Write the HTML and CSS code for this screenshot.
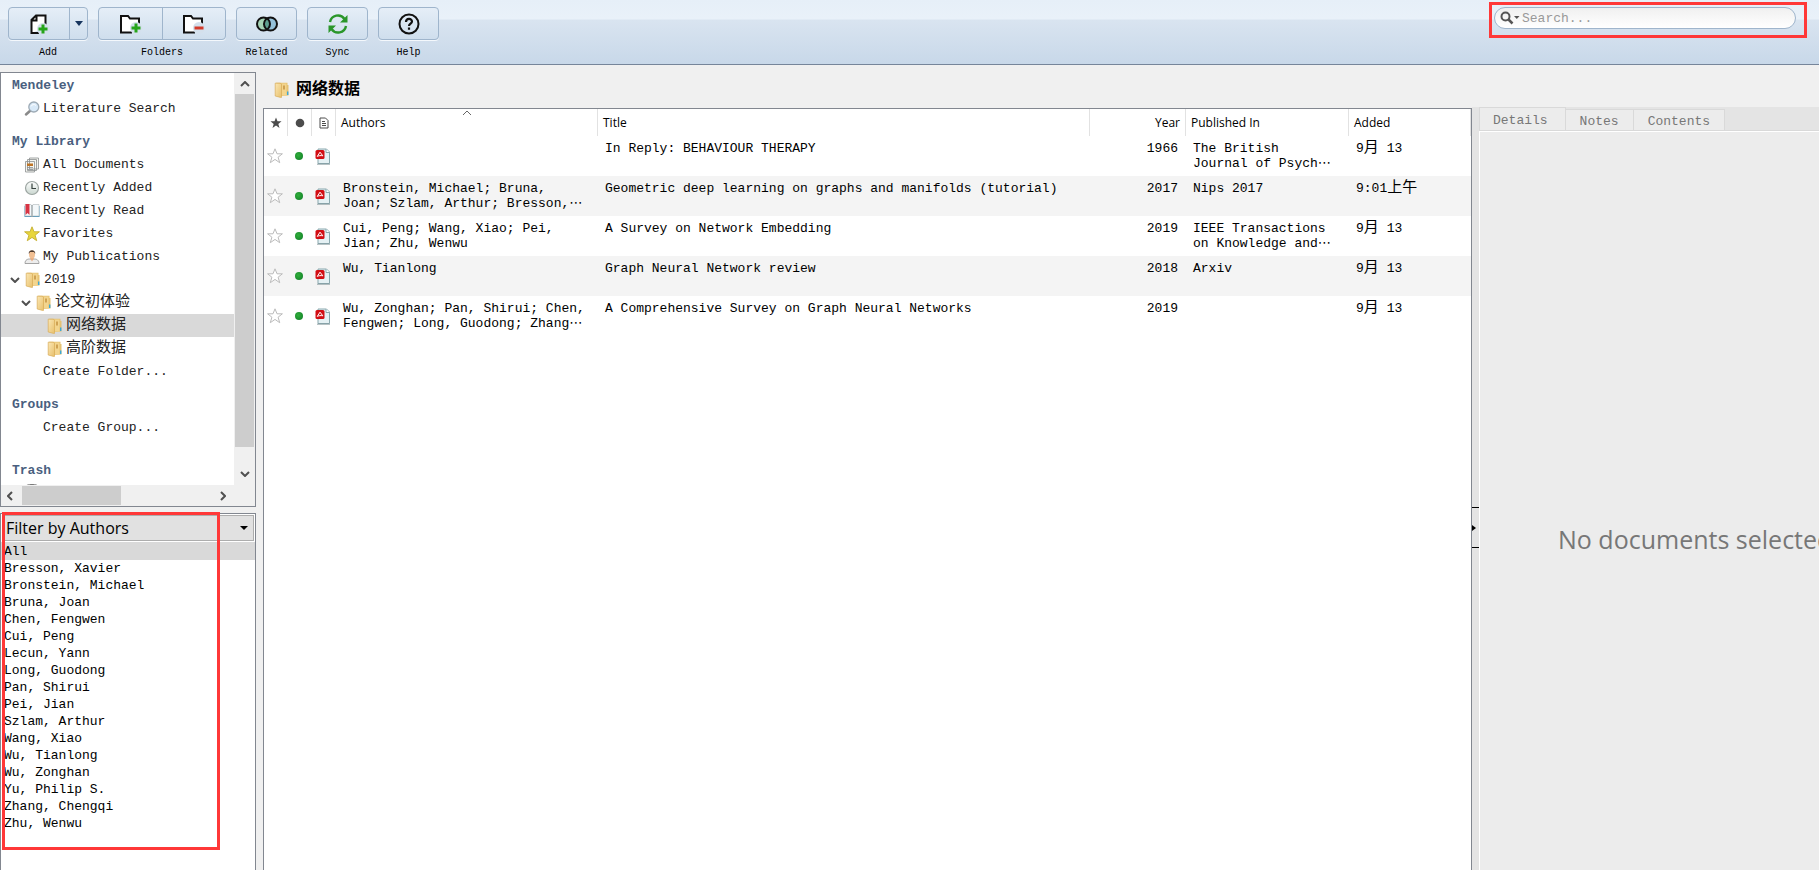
FILE: index.html
```html
<!DOCTYPE html>
<html lang="en">
<head>
<meta charset="utf-8">
<title>Reference Library</title>
<link rel="stylesheet" href="styles.css">
</head>
<body>
<svg class="defs" aria-hidden="true">
  <defs>
    <linearGradient id="gold" x1="0" x2="1" y1="0" y2="1"><stop offset="0" stop-color="#fbe7b4"/><stop offset="1" stop-color="#e8c06c"/></linearGradient>
    <radialGradient id="green" cx=".4" cy=".4" r=".6"><stop offset="0" stop-color="#2fae3a"/><stop offset="1" stop-color="#188a2c"/></radialGradient>
    <linearGradient id="clock" x1="0" x2="0" y1="0" y2="1"><stop offset="0" stop-color="#fff"/><stop offset="1" stop-color="#c9d6cf"/></linearGradient>
    <symbol id="folder" viewBox="0 0 16 16">
      <path d="M2 .8h11.500v2.200h1v10.500L7 14z" fill="#e6c272"/>
      <path d="M7.500 1.500h5v12h-5z" fill="#f3d58e"/>
      <path d="M1.200 1.200h5l1.300 1v13.200H6.500L1.200 14z" fill="url(#gold)" stroke="#d8ac58" stroke-width=".7"/>
      <path d="M9 3.500h2v4H9z" fill="#cfa253"/>
      <path d="M13 9.500h1.400v3.500H13z" fill="#3aa8d8"/>
    </symbol>
    <symbol id="star" viewBox="0 0 16 16"><path d="M8 .8l2 5h5.400l-4.300 3.400 1.600 5.500L8 11.400l-4.700 3.300 1.600-5.500L.6 5.800H6z"/></symbol>
    <symbol id="pdf" viewBox="0 0 16 17">
      <path d="M3 1h8.500l3 3v11.500H3z" fill="#e5f1f4" stroke="#8aa8ae"/>
      <path d="M11 1v3.500h3.500" fill="#fff" stroke="#8aa8ae"/>
      <path d="M2 16.200h13" stroke="#7d9397" stroke-width=".8"/>
      <rect x=".5" y="2" width="9" height="9" rx="1.500" fill="#d20d13"/>
      <path d="M5 4.200L7.800 7.800C5.500 7.300 4 7.700 2.300 8.400z" fill="none" stroke="#fff"/>
    </symbol>
    <symbol id="chev" viewBox="0 0 10 6"><path d="M1 1l4 4 4-4" fill="none" stroke="#505050" stroke-width="2"/></symbol>
  </defs>
</svg>

<header class="toolbar">
  <div class="tool">
    <div class="group">
      <button class="btn btn-add" aria-labelledby="l-add"><svg width="20" height="24" viewBox="0 0 20 24"><path d="M2 21V9l6-6h8.500v13M2 20.800h9" fill="#fff"/><path d="M16.500 13V3.500H7L2.500 8v13H10M7.500 4v4.500H3" fill="none" stroke="#111" stroke-width="2"/><circle cx="14" cy="17" r="6" fill="#d4e0ec"/><path d="M14 12.500v9M9.500 17h9" stroke="#27a51b" stroke-width="3"/></svg></button>
      <button class="btn btn-drop" aria-label="Add options"><svg width="8" height="5" viewBox="0 0 8 5"><path d="M0 0h8L4 5z" fill="#17355e"/></svg></button>
    </div>
    <span class="tool-label label-add" id="l-add">Add</span>
  </div>
  <div class="tool">
    <div class="group">
      <button class="btn btn-folder" aria-label="Create folder"><svg width="24" height="24" viewBox="0 0 24 24"><path d="M2 4h7l2 3h9v14H2z" fill="#fff"/><path d="M20 13V6.500h-9L9 4H2v16.500h11" fill="none" stroke="#111" stroke-width="2"/><circle cx="17" cy="16" r="6" fill="#d4e0ec"/><path d="M17 11.500v9M12.500 16h9" stroke="#27a51b" stroke-width="3"/></svg></button>
      <button class="btn btn-folder split" aria-label="Remove folder"><svg width="24" height="24" viewBox="0 0 24 24"><path d="M2 4h7l2 3h9v14H2z" fill="#fff"/><path d="M20 13V6.500h-9L9 4H2v16.500h11" fill="none" stroke="#111" stroke-width="2"/><circle cx="17" cy="16" r="6" fill="#d4e0ec"/><path d="M12.500 16h9" stroke="#d33a2a" stroke-width="3"/></svg></button>
    </div>
    <span class="tool-label">Folders</span>
  </div>
  <div class="tool">
    <div class="group"><button class="btn btn-one" aria-labelledby="l-rel"><svg width="24" height="18" viewBox="0 0 24 18"><circle cx="8.500" cy="9" r="6.500" fill="#a5d3b5"/><circle cx="15.500" cy="9" r="6.500" fill="#94c1da"/><path d="M12 3.500a6.500 6.500 0 0 1 0 11 6.500 6.500 0 0 1 0-11z" fill="#5e9f90"/><g fill="none" stroke="#111" stroke-width="2"><circle cx="8.500" cy="9" r="6.500"/><circle cx="15.500" cy="9" r="6.500"/></g></svg></button></div>
    <span class="tool-label" id="l-rel">Related</span>
  </div>
  <div class="tool">
    <div class="group"><button class="btn btn-one" aria-labelledby="l-sync"><svg width="22" height="22" viewBox="0 0 22 22"><g fill="none" stroke="#2a962a" stroke-width="2.400"><path d="M3 9a8 8 0 0 1 14.500-3M19 13a8 8 0 0 1-14.500 3"/></g><path d="M20.500 2v7.500H13zM1.500 20v-7.500H9z" fill="#2a962a"/></svg></button></div>
    <span class="tool-label" id="l-sync">Sync</span>
  </div>
  <div class="tool">
    <div class="group"><button class="btn btn-one" aria-labelledby="l-help"><svg width="24" height="24" viewBox="0 0 24 24" fill="none" stroke="#111" stroke-width="2"><circle cx="12" cy="12" r="9.500"/><path d="M9 10c0-4 6-4 6-.5 0 2-3 2.200-3 4.500M12 15.500v2.200" stroke-width="2.200"/></svg></button></div>
    <span class="tool-label" id="l-help">Help</span>
  </div>
  <div class="search">
    <svg width="20" height="14" viewBox="0 0 20 14"><circle cx="5.500" cy="5.500" r="4" fill="none" stroke="#555" stroke-width="2"/><path d="M8.500 8.500l4 4" stroke="#555" stroke-width="2.500"/><path d="M14 5h5.500l-2.700 3z" fill="#555"/></svg>
    <input type="text" placeholder="Search..." aria-label="Search">
    <span class="mark mark-search"></span>
  </div>
</header>

<main class="workspace">
  <div class="sidebar">
    <nav class="tree" aria-label="Library">
      <div class="tree-list">
        <h2>Mendeley</h2>
        <a href="#"><svg width="16" height="16" viewBox="0 0 16 16"><path d="M2 13.500l5-4.500" stroke="#8a8a8a" stroke-width="2.500" stroke-linecap="round"/><circle cx="9.800" cy="6" r="5" fill="#d8e9f8" stroke="#9daab5" stroke-width="1.300"/><path d="M7 5.500a3 3 0 0 1 5-1" stroke="#fff" fill="none"/></svg>Literature Search</a>
        <h2 class="gap">My Library</h2>
        <a href="#"><svg width="16" height="16" viewBox="0 0 16 16" stroke="#8b8f91" stroke-width=".8" fill="#f5f5f0"><path d="M5.500 1h9v11h-9zM3.500 2.500h9v11h-9zM1.500 4.500h9v10.500h-9z"/><path d="M3 6.500h6v2.500H3z" fill="#bd7427" stroke="none"/><path d="M3 10.500h6M3 12.500h6M12 3.500h1"/></svg>All Documents</a>
        <a href="#"><svg width="16" height="16" viewBox="0 0 16 16"><circle cx="8" cy="8" r="6.500" fill="url(#clock)" stroke="#9ca5a1" stroke-width="1.200"/><path d="M8 3.500v5h4" fill="none" stroke="#36413d" stroke-width="1.200"/></svg>Recently Added</a>
        <a href="#"><svg width="16" height="16" viewBox="0 0 16 16"><path d="M.5 3v11h15V3" fill="#4b93bd"/><path d="M1 1.500h6l1 1 1-1h6v11.500H9l-1 1-1-1H1z" fill="#f4f8fa" stroke="#b0b8bb" stroke-width=".6"/><path d="M1.500 1h4v11l-2-2-2 2z" fill="#d83443"/><path d="M8 2v12" stroke="#7b8588"/></svg>Recently Read</a>
        <a href="#"><svg class="fav" width="16" height="16"><use href="#star"/></svg>Favorites</a>
        <a href="#"><svg width="16" height="16" viewBox="0 0 16 16"><path d="M1 14.500c0-4 3-4.500 4.500-4.500h5c2 0 4.500 1 4.500 4.500z" fill="#ededed" stroke="#909090" stroke-width=".8"/><path d="M6 9h4l-2 3.500z" fill="#e9aa7b"/><ellipse cx="8" cy="5.500" rx="3" ry="4" fill="#f1bf93"/><path d="M4.800 5C4 0 12 0 11.200 5L10 3H6z" fill="#4b382d"/></svg>My Publications</a>
        <a href="#" class="lv0"><svg class="exp" width="10" height="6"><use href="#chev"/></svg><svg width="16" height="16"><use href="#folder"/></svg>2019</a>
        <a href="#" class="lv1"><svg class="exp" width="10" height="6"><use href="#chev"/></svg><svg width="16" height="16"><use href="#folder"/></svg><span class="cjk">论文初体验</span></a>
        <a href="#" class="lv2 current"><svg width="16" height="16"><use href="#folder"/></svg><span class="cjk">网络数据</span></a>
        <a href="#" class="lv2"><svg width="16" height="16"><use href="#folder"/></svg><span class="cjk">高阶数据</span></a>
        <a href="#" class="plain">Create Folder...</a>
        <h2 class="gap">Groups</h2>
        <a href="#" class="plain">Create Group...</a>
        <h2 class="gap-wide">Trash</h2>
        <a href="#" class="trash" aria-label="All deleted documents"><svg width="16" height="16" viewBox="0 0 16 16"><path d="M2 3h12l-1.500 12h-9z" fill="#ddd"/><ellipse cx="8" cy="2.500" rx="6.500" ry="2" fill="#bbb" stroke="#777"/></svg></a>
      </div>
      <div class="vbar">
        <svg class="up" width="10" height="6"><use href="#chev"/></svg>
        <div class="vthumb"></div>
        <svg width="10" height="6"><use href="#chev"/></svg>
      </div>
      <div class="hbar">
        <svg width="6" height="10" viewBox="0 0 6 10"><path d="M5 1L1 5l4 4" fill="none" stroke="#505050" stroke-width="2"/></svg>
        <div class="hthumb"></div>
        <svg width="6" height="10" viewBox="0 0 6 10"><path d="M1 1l4 4-4 4" fill="none" stroke="#505050" stroke-width="2"/></svg>
      </div>
    </nav>
    <section class="filter">
      <div class="filter-head">
        <select aria-label="Filter"><option>Filter by Authors</option></select>
        <svg width="8" height="4" viewBox="0 0 8 4"><path d="M0 0h8L4 4z"/></svg>
      </div>
      <ul>
        <li class="current">All</li>
        <li>Bresson, Xavier</li>
        <li>Bronstein, Michael</li>
        <li>Bruna, Joan</li>
        <li>Chen, Fengwen</li>
        <li>Cui, Peng</li>
        <li>Lecun, Yann</li>
        <li>Long, Guodong</li>
        <li>Pan, Shirui</li>
        <li>Pei, Jian</li>
        <li>Szlam, Arthur</li>
        <li>Wang, Xiao</li>
        <li>Wu, Tianlong</li>
        <li>Wu, Zonghan</li>
        <li>Yu, Philip S.</li>
        <li>Zhang, Chengqi</li>
        <li>Zhu, Wenwu</li>
      </ul>
      <span class="mark mark-filter"></span>
    </section>
  </div>

  <section class="documents">
    <h1><svg width="16" height="16"><use href="#folder"/></svg>网络数据</h1>
    <div class="table-box">
      <table>
        <colgroup><col class="c-icon"><col class="c-icon"><col class="c-icon"><col class="c-authors"><col><col class="c-year"><col class="c-pub"><col class="c-added"></colgroup>
        <thead>
          <tr>
            <th class="ic" aria-label="Favorite"><svg class="dark" width="12" height="12" viewBox="0 0 12 12"><use href="#star" width="12" height="12"/></svg></th>
            <th class="ic" aria-label="Read"><svg width="10" height="10" viewBox="0 0 10 10"><circle cx="5" cy="5" r="4.300" fill="#4c4c4c"/></svg></th>
            <th class="ic" aria-label="File"><svg width="10" height="12" viewBox="0 0 10 12" fill="none" stroke="#4c4c4c"><path d="M1 1h5.500l2.500 2.500V11H1zM3 4.500h3M3 6.500h4M3 8.500h4"/></svg></th>
            <th class="sorted">Authors<svg class="sort" width="10" height="6" viewBox="0 0 10 6"><path d="M1 5l4-4 4 4" fill="none" stroke="#666"/></svg></th>
            <th>Title</th><th class="year">Year</th><th>Published In</th><th>Added</th>
          </tr>
        </thead>
        <tbody>
          <tr><td class="ic"><svg class="off" width="16" height="16"><use href="#star"/></svg></td><td class="ic"><svg width="10" height="10"><circle cx="5" cy="5" r="4" fill="url(#green)"/></svg></td><td class="ic"><svg width="16" height="17"><use href="#pdf"/></svg></td><td></td><td>In Reply: BEHAVIOUR THERAPY</td><td class="year">1966</td><td>The British<br>Journal of Psych<span class="dots">&#8943;</span></td><td>9<span class="cjk">月</span> 13</td></tr>
          <tr><td class="ic"><svg class="off" width="16" height="16"><use href="#star"/></svg></td><td class="ic"><svg width="10" height="10"><circle cx="5" cy="5" r="4" fill="url(#green)"/></svg></td><td class="ic"><svg width="16" height="17"><use href="#pdf"/></svg></td><td>Bronstein, Michael; Bruna,<br>Joan; Szlam, Arthur; Bresson,<span class="dots">&#8943;</span></td><td>Geometric deep learning on graphs and manifolds (tutorial)</td><td class="year">2017</td><td>Nips 2017</td><td>9:01<span class="cjk">上午</span></td></tr>
          <tr><td class="ic"><svg class="off" width="16" height="16"><use href="#star"/></svg></td><td class="ic"><svg width="10" height="10"><circle cx="5" cy="5" r="4" fill="url(#green)"/></svg></td><td class="ic"><svg width="16" height="17"><use href="#pdf"/></svg></td><td>Cui, Peng; Wang, Xiao; Pei,<br>Jian; Zhu, Wenwu</td><td>A Survey on Network Embedding</td><td class="year">2019</td><td>IEEE Transactions<br>on Knowledge and<span class="dots">&#8943;</span></td><td>9<span class="cjk">月</span> 13</td></tr>
          <tr><td class="ic"><svg class="off" width="16" height="16"><use href="#star"/></svg></td><td class="ic"><svg width="10" height="10"><circle cx="5" cy="5" r="4" fill="url(#green)"/></svg></td><td class="ic"><svg width="16" height="17"><use href="#pdf"/></svg></td><td>Wu, Tianlong</td><td>Graph Neural Network review</td><td class="year">2018</td><td>Arxiv</td><td>9<span class="cjk">月</span> 13</td></tr>
          <tr><td class="ic"><svg class="off" width="16" height="16"><use href="#star"/></svg></td><td class="ic"><svg width="10" height="10"><circle cx="5" cy="5" r="4" fill="url(#green)"/></svg></td><td class="ic"><svg width="16" height="17"><use href="#pdf"/></svg></td><td>Wu, Zonghan; Pan, Shirui; Chen,<br>Fengwen; Long, Guodong; Zhang<span class="dots">&#8943;</span></td><td>A Comprehensive Survey on Graph Neural Networks</td><td class="year">2019</td><td></td><td>9<span class="cjk">月</span> 13</td></tr>
        </tbody>
      </table>
    </div>
  </section>

  <div class="splitter"><div class="handle"><svg width="4" height="6" viewBox="0 0 4 6"><path d="M0 0l4 3-4 3z"/></svg></div></div>

  <aside class="details">
    <div class="tabs" role="tablist">
      <button class="tab active" role="tab">Details</button>
      <button class="tab" role="tab">Notes</button>
      <button class="tab" role="tab">Contents</button>
    </div>
    <div class="pane"><p>No documents selected</p></div>
  </aside>
</main>
</body>
</html>
```
FILE: styles.css
```css
* { box-sizing: border-box; }

body {
  margin: 0;
  height: 100vh;
  display: flex;
  flex-direction: column;
  overflow: hidden;
  background: #f0f0f0;
  color: #000;
  font: 13px/15px "Liberation Mono", "Noto Sans CJK SC", monospace;
}

button, input, select { font: inherit; color: inherit; }
svg { flex: none; display: block; }
.defs { position: absolute; width: 0; height: 0; }
.cjk { font-size: 15px; }
.dots { font-family: "DejaVu Sans", sans-serif; line-height: 0; }

/* Toolbar */
.toolbar {
  display: flex;
  flex: none;
  align-items: flex-start;
  gap: 10px;
  padding: 7px 23px 4px 8px;
  border-bottom: 1px solid #76859a;
  background: linear-gradient(#e6eff8, #e9f1f9 30%, #d9e4f0 31%, #c8d8e9);
}
.tool { display: flex; flex-direction: column; gap: 6px; }
.group {
  display: flex;
  height: 33px;
  border: 1px solid #9fb5cc;
  border-radius: 4px;
  background: linear-gradient(#e5eef7, #cfdeed);
  box-shadow: 0 1px 0 #f4f8fc;
}
.btn {
  display: flex;
  align-items: center;
  justify-content: center;
  padding: 0;
  border: 0;
  background: none;
}
.btn-add { width: 60px; }
.btn-drop { width: 18px; border-left: 1px solid #9fb5cc; }
.btn-folder { width: 63px; }
.split { border-left: 1px solid #9fb5cc; }
.btn-one { width: 59px; }
.tool-label { font-size: 10px; line-height: 14px; text-align: center; }

.search {
  position: relative;
  display: flex;
  align-items: center;
  gap: 2px;
  width: 302px;
  height: 22px;
  margin-left: auto;
  padding: 0 5px;
  border: 1px solid #9fb5cc;
  border-radius: 11px;
  background: linear-gradient(#f0f0f0, #fff);
}
.search input {
  flex: 1;
  min-width: 0;
  padding: 0;
  border: 0;
  outline: 0;
  background: none;
}
.search input::placeholder { color: #999; opacity: 1; }

.mark { position: absolute; border: 3px solid #ff3838; pointer-events: none; }
.mark-search { inset: -6px -12px -10px -6px; }
.mark-filter { top: -2px; left: 1px; width: 218px; height: 338px; }

/* Workspace */
.workspace { flex: 1; display: flex; min-height: 0; }
.sidebar {
  flex: none;
  width: 256px;
  display: flex;
  flex-direction: column;
  gap: 6px;
  padding-top: 7px;
}
.tree {
  flex: 435 1 0;
  min-height: 0;
  display: grid;
  grid-template: minmax(0, 1fr) 21px / minmax(0, 1fr) 21px;
  border: 1px solid #828790;
  background: #f0f0f0;
}
.tree-list { overflow: hidden; padding-top: 1px; background: #fff; color: #222; }
.tree-list h2 {
  margin: 0;
  padding-left: 11px;
  font-size: 13px;
  line-height: 23px;
  color: #4a5f7f;
}
.tree-list .gap { margin-top: 10px; }
.tree-list .gap-wide { margin-top: 20px; }
.tree-list a {
  display: flex;
  align-items: center;
  gap: 3px;
  height: 23px;
  padding-left: 23px;
  color: inherit;
  text-decoration: none;
}
.tree-list .lv0 { padding-left: 9px; }
.tree-list .lv1 { padding-left: 20px; }
.tree-list .lv2 { padding-left: 46px; }
.tree-list .plain { padding-left: 42px; }
.tree-list .trash { align-items: flex-start; padding-top: 2px; }
.tree-list .current { background: #d9d9d9; }
.exp { margin-right: 2px; }
.fav { fill: #e8d63c; stroke: #c9b43a; stroke-width: 1px; }

.vbar { display: flex; flex-direction: column; align-items: center; padding: 8px 1px; gap: 7px; }
.vthumb { flex: 1; width: 19px; margin-bottom: 17px; background: #cdcdcd; }
.up { transform: rotate(180deg); }
.hbar { display: flex; align-items: center; padding: 0 8px 0 6px; gap: 9px; }
.hthumb { width: 99px; height: 19px; background: #cdcdcd; }
.hbar svg:last-child { margin-left: auto; }

.filter {
  position: relative;
  flex: 357 1 0;
  border: 1px solid #828790;
  border-bottom: 0;
  background: #fff;
}
.filter-head {
  display: flex;
  align-items: center;
  height: 26px;
  margin: 1px;
  padding-right: 5px;
  border: 1px solid #adadad;
  background: #e1e1e1;
}
.filter-head select {
  appearance: none;
  flex: 1;
  padding: 0 3px;
  border: 0;
  background: none;
  font: 16px/22px "Open Sans", "Noto Sans", sans-serif;
}
.filter ul { margin: 0; padding: 0; list-style: none; }
.filter li { padding-left: 3px; line-height: 17px; }
.filter .current { padding-top: 1px; background: #d9d9d9; }

/* Document list */
.documents {
  flex: 1;
  min-width: 0;
  display: flex;
  flex-direction: column;
  padding-left: 7px;
}
h1 {
  display: flex;
  align-items: center;
  gap: 6px;
  margin: 0;
  padding: 13px 0 6px 11px;
  font-size: 16px;
  line-height: 24px;
}
.table-box { flex: 1; border: 1px solid #828790; border-bottom: 0; background: #fff; }
table { width: 100%; table-layout: fixed; border-collapse: separate; border-spacing: 0; }
.c-icon { width: 24px; }
.c-authors { width: 262px; }
.c-year { width: 96px; }
.c-pub { width: 163px; }
.c-added { width: 122px; }
th {
  height: 27px;
  padding: 0 5px;
  border-right: 1px solid #e2e2e2;
  text-align: left;
  font: 12px/18px "Open Sans", "Noto Sans", sans-serif;
}
.sorted { position: relative; }
.sort { position: absolute; top: 1px; left: calc(50% - 5px); }
td {
  height: 40px;
  padding: 5px 0 5px 7px;
  vertical-align: top;
  white-space: nowrap;
  overflow: hidden;
}
.year { text-align: right; }
td.year { padding-right: 8px; }
th.ic, td.ic { padding: 0; vertical-align: middle; }
.ic svg { margin: 0 auto; }
td.ic { padding-right: 2px; }
tbody tr:nth-child(even) { background: #f4f4f4; }
.dark { fill: #4c4c4c; }
.off { fill: #fff; stroke: #bbb; stroke-width: 1px; }

/* Details */
.splitter {
  flex: none;
  width: 7px;
  margin-top: 42px;
  padding-top: 400px;
  background: #e4e4e4;
}
.handle {
  display: flex;
  align-items: center;
  height: 41px;
  border: solid #000;
  border-width: 1px 0;
}
.details { flex: none; width: 340px; margin-top: 42px; display: flex; flex-direction: column; }
.tabs {
  display: flex;
  align-items: flex-end;
  height: 24px;
  background: #e4e4e4;
  border-bottom: 1px solid #d9d9d9;
}
.tab {
  height: 21px;
  padding: 2px 14px 0;
  border: 1px solid #d9d9d9;
  border-width: 1px 1px 0 0;
  background: #ececec;
  color: #777;
}
.tab.active { height: 23px; border-left-width: 1px; padding: 2px 17px 0 13px; }
.pane {
  flex: 1;
  display: flex;
  align-items: center;
  overflow: hidden;
  padding: 76px 0 0 78px;
  border: solid #fff;
  border-width: 1px 0 0 1px;
  background: #ececec;
}
.pane p {
  margin: 0;
  color: #777;
  white-space: nowrap;
  font: 25px/36px "Open Sans", "Noto Sans", sans-serif;
}
```
